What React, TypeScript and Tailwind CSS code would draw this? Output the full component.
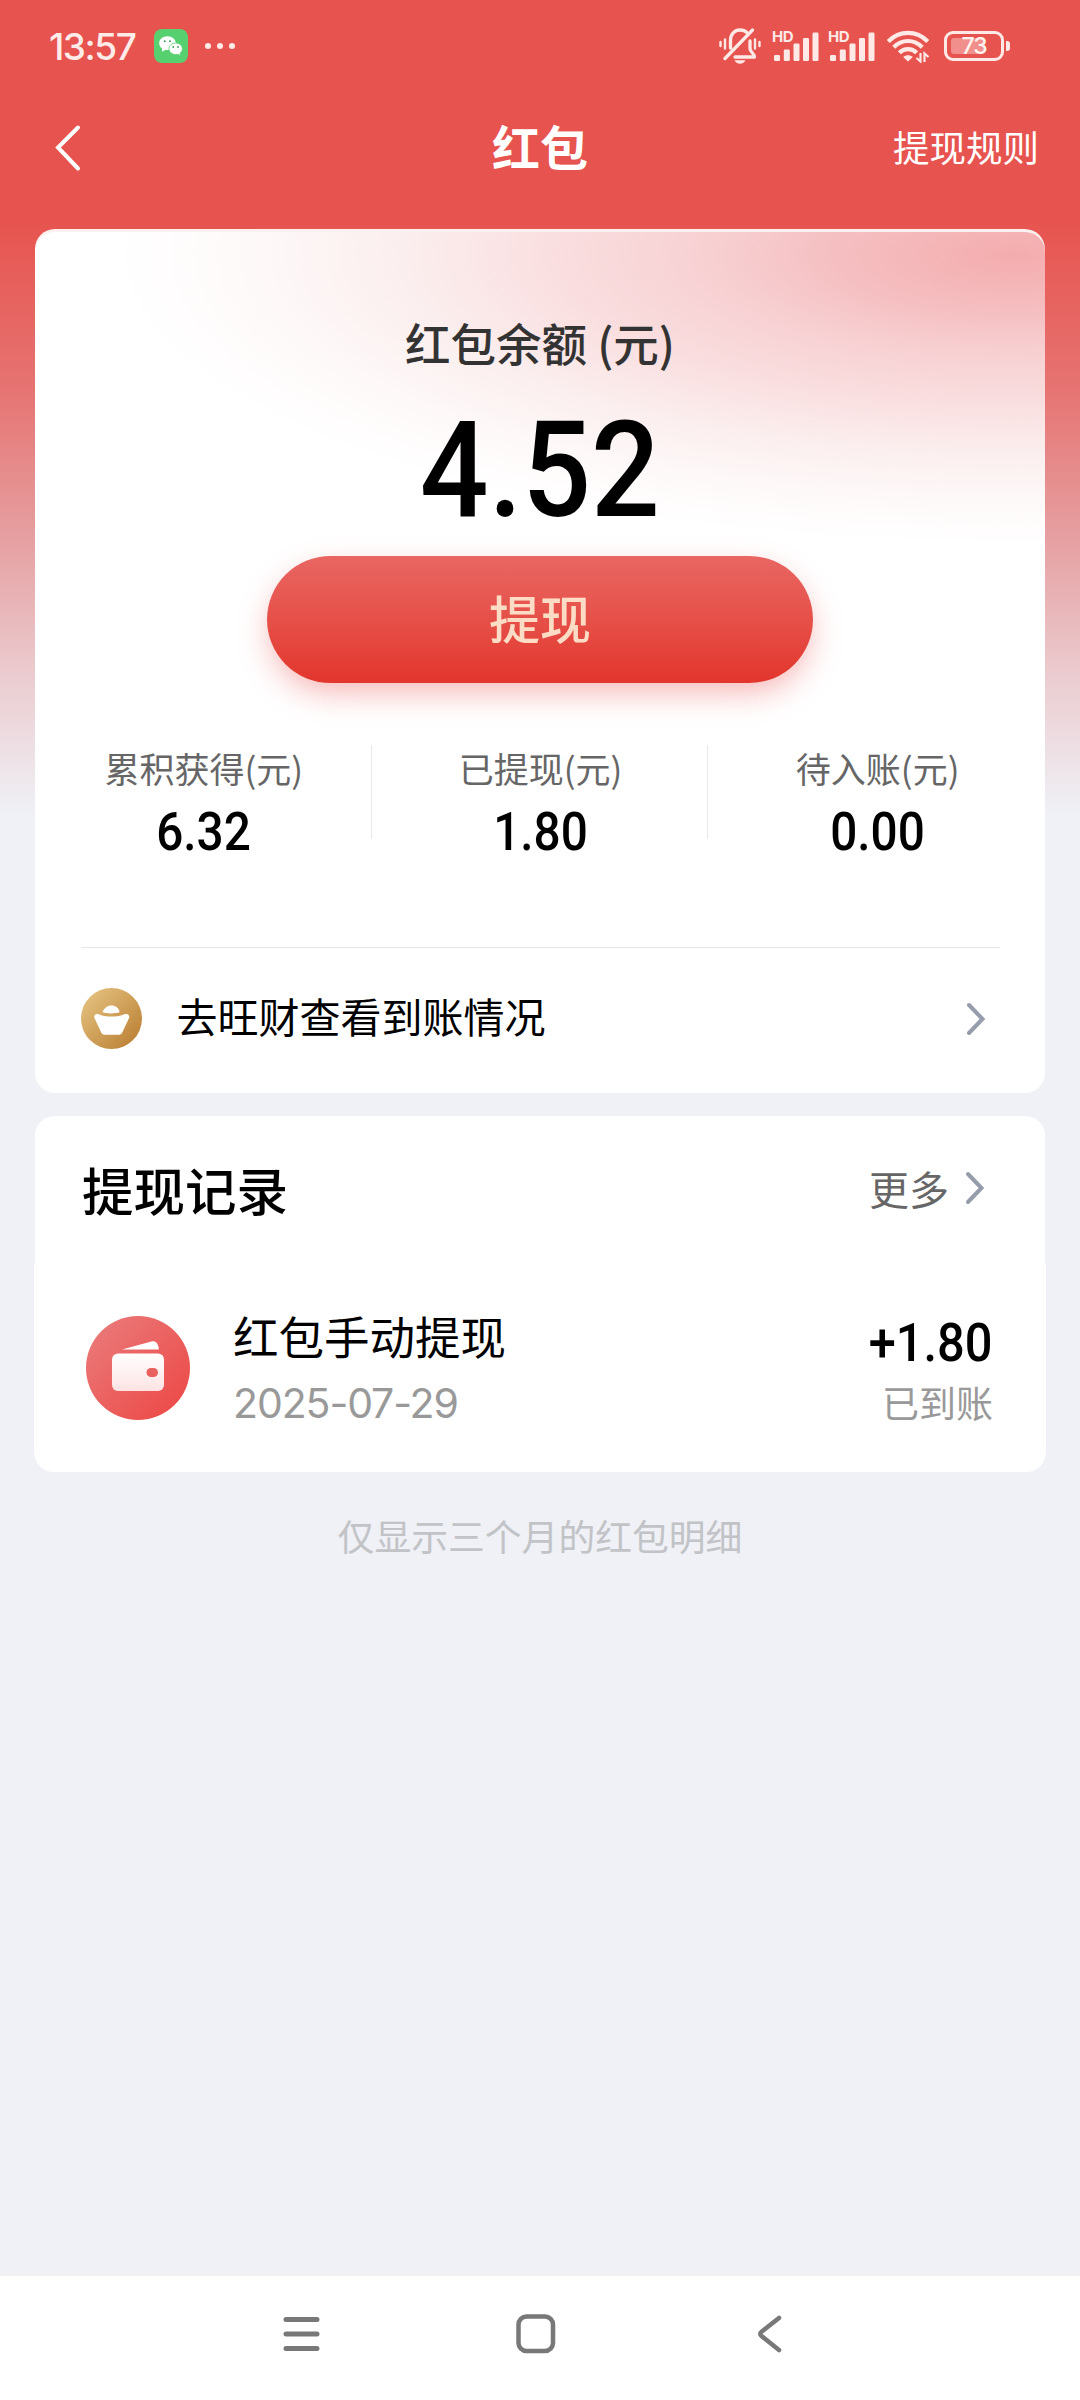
import type { ReactNode } from 'react';

interface Stat {
  label: string;
  value: string;
}

const stats: Stat[] = [
  { label: '累积获得(元)', value: '6.32' },
  { label: '已提现(元)', value: '1.80' },
  { label: '待入账(元)', value: '0.00' },
];

function Amount({ children, className }: { children: ReactNode; className: string }) {
  return (
    <span className={`inline-block whitespace-nowrap font-['Roboto',sans-serif] leading-none font-medium text-black ${className}`}>
      {children}
    </span>
  );
}

function WechatIcon() {
  return (
    <svg width="34" height="34" viewBox="0 0 34 34">
      <rect width="34" height="34" rx="8" fill="#57d070" />
      <path d="M13.5 7.3c-4.700 0-8.300 3-8.300 6.900 0 2.200 1.100 4 2.900 5.300v3.300l3.100-1.900c.8.200 1.500.2 2.300.2 4.600 0 8.300-3 8.300-6.900s-3.700-6.900-8.300-6.900z" fill="#fff" />
      <path d="M21.700 14c-3.700 0-6.700 2.600-6.700 5.800s3 5.800 6.700 5.800c.8 0 1.500-.1 2.200-.3l2.300 1.400-.2-2.500c1.500-1.100 2.400-2.600 2.400-4.400 0-3.200-3-5.800-6.700-5.800z" fill="#fff" stroke="#57d070" strokeWidth=".8" />
      <circle cx="10.800" cy="12.200" r="1" fill="#3f9f58" />
      <circle cx="16" cy="12.200" r="1" fill="#3f9f58" />
      <circle cx="19.300" cy="18" r=".9" fill="#3f9f58" />
      <circle cx="24" cy="18" r=".9" fill="#3f9f58" />
    </svg>
  );
}

function MuteIcon() {
  return (
    <svg width="42" height="36" viewBox="0 0 42 36" fill="none" stroke="#ffe9e6" strokeLinecap="round" strokeLinejoin="round">
      <path d="M1.500 14v4M6 11.500v9M36 11.500v9M40.500 14v4" strokeWidth="2.400" />
      <path d="M11.500 20v-7.500C11.500 6 15.500 2 21 2c3 0 5.300 1 7 2.700" strokeWidth="3.300" />
      <path d="M31 13v7.500c0 3.500 4.500 5 4.500 8.500H16" strokeWidth="3.300" />
      <path d="M33.500 2L6 30.500" strokeWidth="3.300" />
      <path d="M15.500 32.300h11c-1 2.200-3 3.500-5.500 3.500s-4.500-1.300-5.500-3.500z" fill="#ffe9e6" stroke="none" />
    </svg>
  );
}

function SignalIcon() {
  return (
    <div className="relative h-[30px] w-[47px]">
      <span className="absolute -top-0.5 left-0 font-['Inter',sans-serif] text-[15px] leading-none font-bold tracking-[-0.5px] text-[#ffe9e6]">
        HD
      </span>
      <svg width="47" height="30" viewBox="0 0 47 30" fill="#ffe9e6">
        <rect x="2" y="24" width="6" height="6" rx="1.200" />
        <rect x="11.800" y="18.500" width="6" height="11.500" rx="1.200" />
        <rect x="21.500" y="12.500" width="6" height="17.500" rx="1.200" />
        <rect x="31" y="7" width="6" height="23" rx="1.200" />
        <rect x="40.500" y="1.500" width="6" height="28.500" rx="1.200" />
      </svg>
    </div>
  );
}

function WifiIcon() {
  return (
    <svg width="44" height="34" viewBox="0 0 44 34" fill="none" stroke="#ffe9e6" strokeWidth="4.200">
      <path d="M2.200 12.500C13.500 1 30.500 1 41.800 12.500" />
      <path d="M7.700 18.200c8-8.300 20.600-8.300 28.600 0" />
      <path d="M13.300 23.800c5-5 12.400-5 17.400 0" />
      <path d="M17.200 28c2.800-2.400 6.800-2.400 9.600 0L22 32.500z" fill="#ffe9e6" stroke="none" />
      <path d="M34.500 24v8.500l-4-3.500M38.500 33v-8.500l4 3.500" strokeWidth="2.200" />
    </svg>
  );
}

function Battery() {
  return (
    <div className="flex items-center gap-[2px]">
      <div className="flex h-[30px] w-[60px] items-center rounded-[9px] border-[3px] border-[#ffe9e6] p-[4px]">
        <div className="relative h-full w-full">
          <div className="h-full w-[34px] rounded-[3px] bg-[#f08f8b]" />
          <span className="absolute inset-0 flex items-center justify-center font-['Inter',sans-serif] text-[23px] leading-none font-medium tracking-[-1px] text-[#fff3f0]">
            73
          </span>
        </div>
      </div>
      <div className="h-[10px] w-[4px] rounded-r-[3px] bg-[#ffe9e6]" />
    </div>
  );
}

function StatusBar() {
  return (
    <div className="flex h-[92px] items-center pr-[70px] pl-[49px]">
      <span className="font-['Inter',sans-serif] text-[37px] leading-none font-medium tracking-[-1.500px] text-[#ffece9]">13:57</span>
      <div className="ml-[19px]">
        <WechatIcon />
      </div>
      <div className="ml-[17px] flex gap-[6px]">
        <i className="size-[6px] rounded-full bg-[#ffece9]" />
        <i className="size-[6px] rounded-full bg-[#ffece9]" />
        <i className="size-[6px] rounded-full bg-[#ffece9]" />
      </div>
      <div className="ml-auto flex items-center">
        <MuteIcon />
        <div className="ml-[11px] flex gap-[9px]">
          <SignalIcon />
          <SignalIcon />
        </div>
        <div className="mr-[14px] ml-[11px]">
          <WifiIcon />
        </div>
        <Battery />
      </div>
    </div>
  );
}

function Chevron() {
  return (
    <svg width="20" height="34" viewBox="0 0 20 34" fill="none" stroke="#969cab" strokeWidth="4" strokeLinecap="round">
      <path d="M3 3l13.500 14L3 31" />
    </svg>
  );
}

function IngotIcon() {
  return (
    <svg width="61" height="61" viewBox="0 0 61 61">
      <defs>
        <linearGradient id="gold" x1="0" y1="0" x2="1" y2="1">
          <stop offset=".1" stopColor="#e3bf7d" />
          <stop offset=".9" stopColor="#bc8236" />
        </linearGradient>
      </defs>
      <circle cx="30.500" cy="30.500" r="30.500" fill="url(#gold)" />
      <path d="M21.500 24.300C23 20 26.500 17.500 30.500 17.500s7.500 2.500 8 6.800c-5 1.500-12 1.500-17 0z" fill="#fff" />
      <path d="M14.500 26.500c1.500-.8 3.500-.3 5 .5 6.500 2 15.500 2 22 0 1.500-.8 3.500-1.300 5.500-.5 1.500.8 1.500 2.500.8 4l-6.300 13.500c-.8 1.800-1.800 2.700-3.500 2.700H23.500c-1.700 0-2.700-.9-3.500-2.700l-6.300-13.500c-.7-1.500-.7-3.200.8-4z" fill="#fff" />
    </svg>
  );
}

function WalletIcon() {
  return (
    <svg width="104" height="104" viewBox="0 0 104 104">
      <defs>
        <linearGradient id="walletBg" x1="0" y1="0" x2="1" y2="1">
          <stop offset=".1" stopColor="#ea7878" />
          <stop offset=".9" stopColor="#ec4b48" />
        </linearGradient>
        <linearGradient id="walletBody" x1="0" y1="0" x2="0" y2="1">
          <stop offset="0" stopColor="#fff" />
          <stop offset="1" stopColor="#fde3e3" />
        </linearGradient>
      </defs>
      <circle cx="52" cy="52" r="52" fill="url(#walletBg)" />
      <path d="M36 33.500l28.500-7.700c3.500-1 5.500-.5 7 2.500 1 2 1.300 3.500 1.300 5.200z" fill="#fff" />
      <path d="M32.500 37.500h39.500a6 6 0 0 1 6 6v25.500a6 6 0 0 1-6 6H32a6 6 0 0 1-6-6v-25.500a6 6 0 0 1 6-6z" fill="url(#walletBody)" />
      <rect x="60.500" y="52" width="11.500" height="9" rx="4.500" fill="#ea6260" />
    </svg>
  );
}

function BalanceCard() {
  return (
    <section className="mx-[35px] mt-[25px] flex h-[864px] flex-col items-center rounded-[20px] bg-white bg-[radial-gradient(ellipse_900px_290px_at_97%_3%,#f4acae_0%,#f5bfc1_20%,#f7cfd1_33%,#fae0e1_53%,#fbeeee_68%,#fef9f9_85%,#ffffff_100%)] shadow-[inset_0_3px_0_#fdf0ef]">
      <h2 className="mt-[85px] flex h-[60px] items-center pb-0.5 text-[45.500px] leading-none font-medium whitespace-pre text-[#333]">红包余额 (元)</h2>
      <div className="flex h-[182px] items-center pt-[10px]">
        <Amount className="scale-x-[0.91] text-[133px]">4.52</Amount>
      </div>
      <button
        type="button"
        className="flex h-[127px] w-[546px] items-center justify-center rounded-full bg-linear-to-b from-[#e96662] to-[#e2342b] pb-1 text-[51px] leading-none font-medium text-[#fddcc5] shadow-[0_12px_32px_-4px_rgba(232,60,60,0.4)]"
      >
        提现
      </button>
      <div className="mt-[62px] flex w-full">
        {stats.map((stat, i) => (
          <div key={stat.label} className="flex flex-1">
            <div className="flex flex-1 flex-col items-center pl-0.5">
              <span className="flex h-[46px] items-center pb-0.5 text-[35px] leading-none text-[#666]">{stat.label}</span>
              <span className="flex h-[78px] items-center pt-1">
                <Amount className="scale-x-[0.9] text-[53px]">{stat.value}</Amount>
              </span>
            </div>
            {i < stats.length - 1 && <div className="h-[94px] w-px bg-[#e9e9eb]" />}
          </div>
        ))}
      </div>
      <a className="mt-[78px] flex h-[144px] w-[919px] items-center border-t border-[#e6e6e8] pr-[14px] pb-0.5">
        <IngotIcon />
        <span className="ml-[35px] pb-1.5 text-[41px] leading-none text-black">去旺财查看到账情况</span>
        <span className="ml-auto">
          <Chevron />
        </span>
      </a>
    </section>
  );
}

function RecordCard() {
  return (
    <section className="mx-[35px] mt-[23px]">
      <div className="flex h-[148px] items-center rounded-t-[20px] bg-white pr-[60px] pl-[47px]">
        <h2 className="pb-0.5 text-[51.500px] leading-none font-medium text-black">提现记录</h2>
        <span className="ml-auto pb-1 text-[40px] leading-none text-[#666]">更多</span>
        <span className="mb-1 ml-[16px]">
          <Chevron />
        </span>
      </div>
      <div className="-mx-px flex h-[208px] items-center rounded-b-[20px] bg-white pr-[53px] pl-[52px]">
        <WalletIcon />
        <div className="ml-[43px] flex flex-col">
          <span className="flex h-[65px] items-center text-[45.500px] leading-none text-black">红包手动提现</span>
          <span className="flex h-[65px] items-center pt-1.5 font-['Inter',sans-serif] text-[41px] leading-none tracking-[-1.100px] text-[#999]">
            2025-07-29
          </span>
        </div>
        <div className="ml-auto flex flex-col items-end">
          <span className="flex h-[65px] items-center pt-[16px]">
            <Amount className="origin-right scale-x-[0.92] text-[53px]">+1.80</Amount>
          </span>
          <span className="flex h-[65px] items-center pt-1 text-[37px] leading-none text-[#999]">已到账</span>
        </div>
      </div>
    </section>
  );
}

function SystemNav() {
  return (
    <nav className="flex h-[127px] items-center justify-between border-t-[3px] border-[#f1f1f1] bg-white pr-[298px] pb-2 pl-[282px]">
      <svg width="38" height="36" viewBox="0 0 38 36" stroke="#787878" strokeWidth="5" strokeLinecap="round">
        <path d="M4 3.500h31M4 18h31M4 32.500h31" />
      </svg>
      <svg className="mr-[5px]" width="40" height="40" viewBox="0 0 40 40" fill="none" stroke="#787878" strokeWidth="4.500">
        <rect x="2.500" y="2.500" width="34.500" height="34.500" rx="8" />
      </svg>
      <svg width="25" height="38" viewBox="0 0 25 38" fill="none" stroke="#787878" strokeWidth="4.500" strokeLinecap="round">
        <path d="M22 3L4.500 16.800c-1.600 1.300-1.600 3 0 4.300L22 35" />
      </svg>
    </nav>
  );
}

export default function App() {
  return (
    <div className="flex h-[2400px] w-[1080px] flex-col bg-[#eff1f6] bg-[linear-gradient(to_bottom,#e7534e_0px,#e7534e_215px,#e67472_390px,#e6a0a2_540px,#ebcdd1_680px,#eff1f6_815px)] font-['Noto_Sans_CJK_SC',sans-serif]">
      <StatusBar />
      <header className="grid h-[112px] grid-cols-3 items-center pr-[41px] pl-[54px]">
        <svg width="28" height="48" viewBox="0 0 28 48" fill="none" stroke="#fff" strokeWidth="4" strokeLinecap="round">
          <path d="M24 3.500L4 23.500 24 44.500" />
        </svg>
        <h1 className="mr-[13px] pb-1.5 text-center text-[48px] leading-none font-bold text-white">红包</h1>
        <span className="pb-0.5 text-right text-[36.500px] leading-none text-white">提现规则</span>
      </header>
      <BalanceCard />
      <RecordCard />
      <p className="flex h-[126px] items-center justify-center text-[36.800px] leading-none text-[#c2c3c6]">仅显示三个月的红包明细</p>
      <div className="flex-1" />
      <SystemNav />
    </div>
  );
}
